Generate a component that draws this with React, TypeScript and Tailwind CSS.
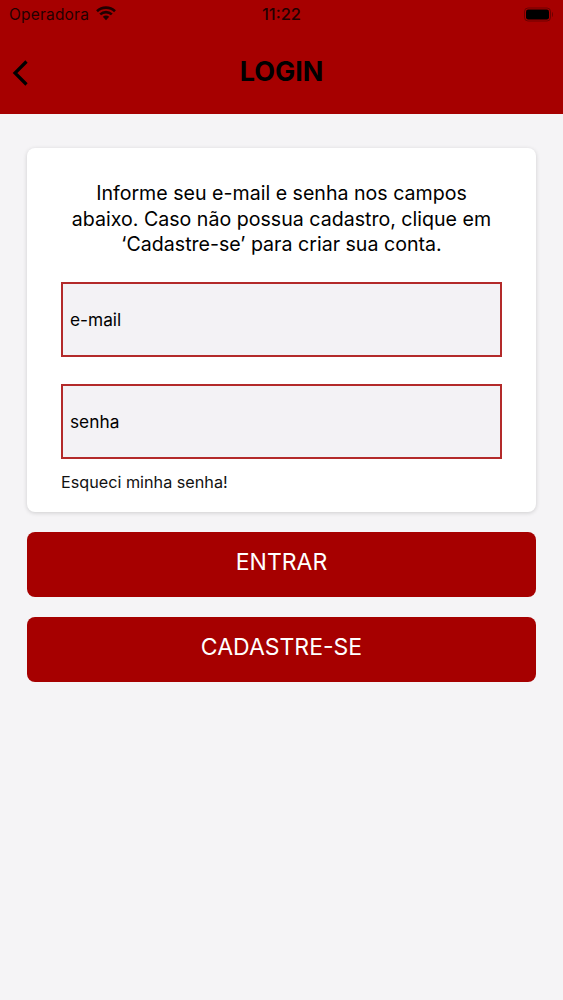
const font = { fontFamily: "Inter, sans-serif" };

function Wifi() {
  return (
    <svg width="20" height="15" viewBox="0 0 20 15" className="ml-[7px] mb-[2px]">
      <path d="M1 5.2 C6 0.4 14 0.4 19 5.2" fill="none" stroke="#000" strokeWidth="2.6" />
      <path d="M4.2 8.4 C7.6 5.3 12.4 5.3 15.8 8.4" fill="none" stroke="#000" strokeWidth="2.6" />
      <path d="M6.8 10.8 C8.6 9.2 11.4 9.2 13.2 10.8 L10 14.2 Z" fill="#000" />
    </svg>
  );
}

function Battery() {
  return (
    <svg width="30" height="15" viewBox="0 0 30 15">
      <rect x="0.5" y="1" width="26" height="13" rx="3.5" fill="none" stroke="#000" strokeOpacity="0.35" />
      <rect x="2" y="2.5" width="23" height="10" rx="2.2" fill="#000" />
      <path d="M28 5 C29.2 5.4 29.2 9.6 28 10 Z" fill="#000" fillOpacity="0.4" />
    </svg>
  );
}

function Field({ label }: { label: string }) {
  return (
    <div className="flex h-[75px] items-center border-2 border-[#b32a2a] bg-[#f3f2f5] pl-[7px] text-[17.3px] text-black">
      {label}
    </div>
  );
}

function Action({ label }: { label: string }) {
  return (
    <button className="flex h-[64.5px] w-full items-center justify-center rounded-lg bg-[#a60000] pb-[5px] text-[23px] text-white">
      {label}
    </button>
  );
}

export default function App() {
  return (
    <div style={font} className="flex min-h-[1000px] flex-col bg-[#f5f4f6]">
      <header className="h-[114px] bg-[#a60000] text-black">
        <div className="flex h-[29px] items-center px-[9px]">
          <div className="flex flex-1 items-center text-[15.5px] tracking-[0.2px] opacity-80">
            Operadora
            <Wifi />
          </div>
          <div className="flex-1 text-center text-[16.5px] font-medium opacity-80">11:22</div>
          <div className="flex flex-1 justify-end">
            <Battery />
          </div>
        </div>
        <div className="flex h-[85px] items-center pl-[11px]">
          <svg width="18" height="28" viewBox="0 0 18 28" className="mt-[2px] shrink-0">
            <path d="M15.5 2.5 L4 14 L15.5 25.5" fill="none" stroke="#000" strokeWidth="3.2" />
          </svg>
          <h1 className="flex-1 pr-[29px] pt-[1px] text-center text-[27px] font-bold">LOGIN</h1>
        </div>
      </header>
      <main className="flex flex-col gap-[20.5px] px-[27px] pt-[34px]">
        <section className="rounded-lg bg-white px-[34px] pb-[20px] pt-[33px] shadow-[0_1px_4px_rgba(0,0,0,0.16)]">
          <p className="text-center text-[19.6px] leading-[25.5px] text-black">
            Informe seu e-mail e senha nos campos
            <br />
            abaixo. Caso não possua cadastro, clique em
            <br />
            ‘Cadastre-se’ para criar sua conta.
          </p>
          <div className="mt-[24.5px] flex flex-col gap-[27px]">
            <Field label="e-mail" />
            <Field label="senha" />
          </div>
          <p className="mt-[12.5px] text-[16.2px] leading-[20px] text-[#111]">Esqueci minha senha!</p>
        </section>
        <Action label="ENTRAR" />
        <Action label="CADASTRE-SE" />
      </main>
    </div>
  );
}
